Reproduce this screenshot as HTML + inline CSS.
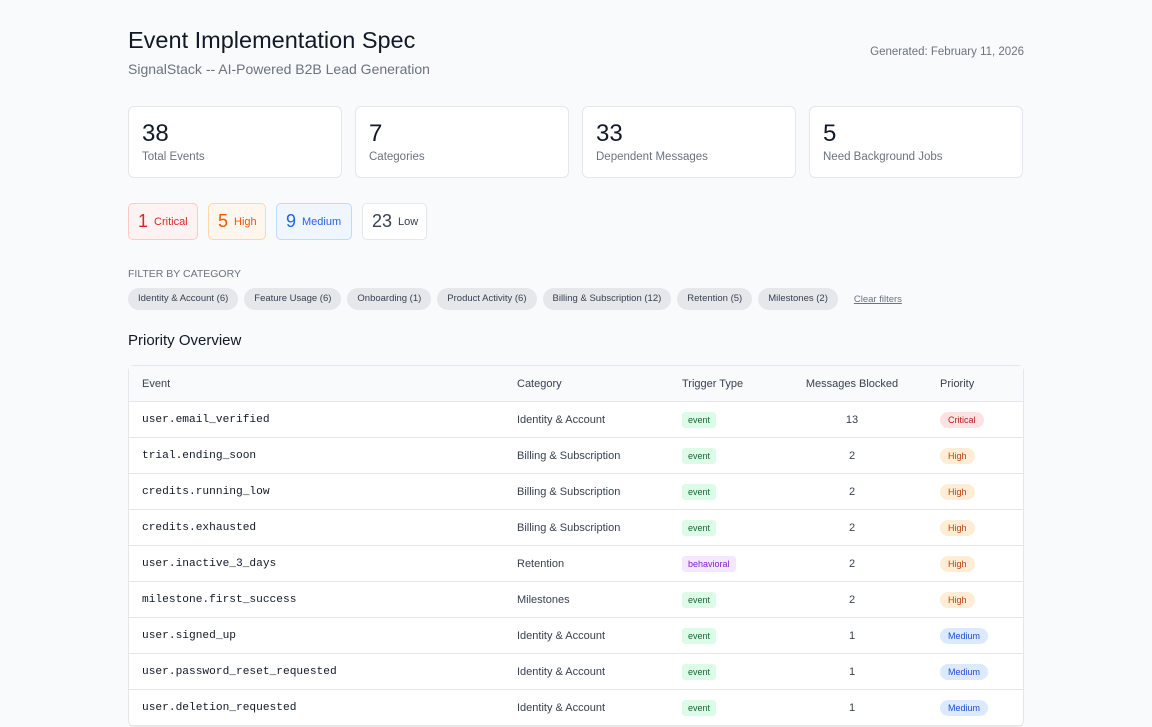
<!DOCTYPE html><html><head><style>
*{box-sizing:border-box;margin:0;padding:0}
body{width:1152px;height:720px;overflow:hidden;background:#f9fafb;font-family:"Liberation Sans",sans-serif;color:#111827}
.wrap{position:absolute;left:128px;width:896px;top:0}
h1{position:absolute;top:27px;font-size:23.5px;font-weight:400;color:#111827}
.sub{position:absolute;top:61px;font-size:14px;color:#6b7280}
.gen{position:absolute;right:0;top:46px;font-size:11.5px;color:#6b7280}
.stats{position:absolute;top:106px;display:flex;gap:13px}
.st{width:214px;height:72px;background:#fff;border:1px solid #e5e7eb;border-radius:6px;padding:14px 13px}
.st b{display:block;font-weight:400;font-size:24px;line-height:26px}
.st span{font-size:11.5px;color:#6b7280}
.pri{position:absolute;top:203px;display:flex;gap:10px}
.p{height:37px;border-radius:5px;border:1px solid;display:flex;align-items:center;padding:0 9px;gap:6px;font-size:11px}
.p b{font-weight:400;font-size:18px}
.fl{position:absolute;top:268px;font-size:10.5px;color:#6b7280}
.chips{position:absolute;top:288px;display:flex;gap:6px;align-items:center}
.c{height:22px;border-radius:11px;background:#e5e7eb;font-size:9.5px;padding:0 10px;line-height:22px;color:#374151}
.clr{font-size:9.5px;color:#6b7280;text-decoration:underline;margin-left:10px}
h2{position:absolute;top:332px;font-size:15px;font-weight:400}
table{position:absolute;top:365px;width:896px;border-collapse:separate;border-spacing:0;background:#fff;border:1px solid #e5e7eb;border-radius:6px;font-size:11px;color:#374151}
th{height:36px;background:#f9fafb;font-weight:400;text-align:left;color:#374151;border-bottom:1px solid #e5e7eb}
td{height:36px;border-bottom:1px solid #e5e7eb}
th:first-child,td:first-child{padding-left:13px}
td.m{font-family:"Liberation Mono",monospace;font-size:11.2px;color:#111827}
.ctr{text-align:center}
.pc{padding-left:28px}
.t{font-size:9px;padding:3px 6px;border-radius:3px;background:#dcfce7;color:#166534}
.t.b{background:#f3e8ff;color:#7e22ce}
.g{font-size:9px;padding:3px 8px;border-radius:8px}
.cr{background:#fee2e2;color:#b91c1c}.hi{background:#ffedd5;color:#c2410c}.me{background:#dbeafe;color:#1d4ed8}
</style></head><body><div class="wrap">
<h1>Event Implementation Spec</h1>
<div class="sub">SignalStack -- AI-Powered B2B Lead Generation</div>
<div class="gen">Generated: February 11, 2026</div>
<div class="stats">
<div class="st"><b>38</b><span>Total Events</span></div>
<div class="st"><b>7</b><span>Categories</span></div>
<div class="st"><b>33</b><span>Dependent Messages</span></div>
<div class="st"><b>5</b><span>Need Background Jobs</span></div>
</div>
<div class="pri">
<div class="p" style="background:#fef2f2;border-color:#fecaca;color:#dc2626;width:70px"><b>1</b>Critical</div>
<div class="p" style="background:#fff7ed;border-color:#fed7aa;color:#ea580c;width:58px"><b>5</b>High</div>
<div class="p" style="background:#eff6ff;border-color:#bfdbfe;color:#2563eb;width:76px"><b>9</b>Medium</div>
<div class="p" style="background:#fff;border-color:#e5e7eb;color:#374151;width:65px"><b>23</b>Low</div>
</div>
<div class="fl">FILTER BY CATEGORY</div>
<div class="chips">
<span class="c">Identity &amp; Account (6)</span><span class="c">Feature Usage (6)</span><span class="c">Onboarding (1)</span><span class="c">Product Activity (6)</span><span class="c">Billing &amp; Subscription (12)</span><span class="c">Retention (5)</span><span class="c">Milestones (2)</span><span class="clr">Clear filters</span>
</div>
<h2>Priority Overview</h2>
<table>
<tr><th style="width:388px">Event</th><th style="width:165px">Category</th><th style="width:110px">Trigger Type</th><th class="ctr" style="width:120px">Messages Blocked</th><th class="pc">Priority</th></tr>
<tr><td class="m">user.email_verified</td><td>Identity &amp; Account</td><td><span class="t">event</span></td><td class="ctr">13</td><td class="pc"><span class="g cr">Critical</span></td></tr>
<tr><td class="m">trial.ending_soon</td><td>Billing &amp; Subscription</td><td><span class="t">event</span></td><td class="ctr">2</td><td class="pc"><span class="g hi">High</span></td></tr>
<tr><td class="m">credits.running_low</td><td>Billing &amp; Subscription</td><td><span class="t">event</span></td><td class="ctr">2</td><td class="pc"><span class="g hi">High</span></td></tr>
<tr><td class="m">credits.exhausted</td><td>Billing &amp; Subscription</td><td><span class="t">event</span></td><td class="ctr">2</td><td class="pc"><span class="g hi">High</span></td></tr>
<tr><td class="m">user.inactive_3_days</td><td>Retention</td><td><span class="t b">behavioral</span></td><td class="ctr">2</td><td class="pc"><span class="g hi">High</span></td></tr>
<tr><td class="m">milestone.first_success</td><td>Milestones</td><td><span class="t">event</span></td><td class="ctr">2</td><td class="pc"><span class="g hi">High</span></td></tr>
<tr><td class="m">user.signed_up</td><td>Identity &amp; Account</td><td><span class="t">event</span></td><td class="ctr">1</td><td class="pc"><span class="g me">Medium</span></td></tr>
<tr><td class="m">user.password_reset_requested</td><td>Identity &amp; Account</td><td><span class="t">event</span></td><td class="ctr">1</td><td class="pc"><span class="g me">Medium</span></td></tr>
<tr><td class="m">user.deletion_requested</td><td>Identity &amp; Account</td><td><span class="t">event</span></td><td class="ctr">1</td><td class="pc"><span class="g me">Medium</span></td></tr>
</table>
</div></body></html>
